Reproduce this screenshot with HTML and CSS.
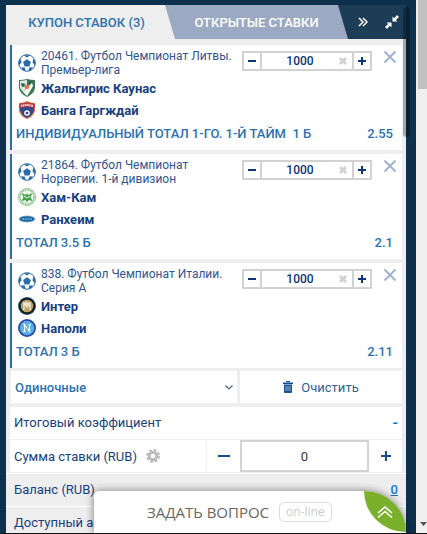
FILE: index.html
```html
<!DOCTYPE html>
<html lang="ru">
<head>
<meta charset="utf-8">
<title>Купон ставок</title>
<link rel="stylesheet" href="styles.css">
</head>
<body>

<svg class="sprite">
  <symbol id="ball" viewBox="0 0 18 18">
    <circle cx="9" cy="9" r="8.3" fill="#fff" stroke="#2b6ca8" stroke-width="1"/>
    <path fill="#2b6ca8" d="M9 5.2l3.900 2.800-1.500 4.500H6.600L5.100 8zM5.400 1.300h7.200L9 3.500zM.6 7.500L2.700 4.500l.8 4L.9 11.600zM17.400 7.500L15.300 4.500l-.8 4 2.600 3.100zM3.200 13.200l3.500.4 1 3.500-3-1.100zM14.800 13.200l-3.500.4-1 3.500 3-1.100z"/>
  </symbol>
  <symbol id="cross" viewBox="0 0 14 14">
    <path d="M1.500 1.500l11 11M12.500 1.500l-11 11" stroke="#a0b3d0" stroke-width="2" fill="none"/>
  </symbol>
  <symbol id="wipe" viewBox="0 0 10 10">
    <path d="M2 2l6 6M8 2L2 8" stroke="#d2d2d2" stroke-width="3" fill="none"/>
  </symbol>
</svg>

<div class="page">
  <div class="coupon">
    <div class="tabs">
      <button class="tab active">КУПОН СТАВОК (3)</button>
      <button class="tab open-bets">ОТКРЫТЫЕ СТАВКИ</button>
      <button class="tool" aria-label="Свернуть вправо">
        <svg width="10" height="10" viewBox="0 0 10 10"><path d="M1 1l4 4-4 4M5 1l4 4-4 4" fill="none" stroke="#fff" stroke-width="1.500"/></svg>
      </button>
      <button class="tool" aria-label="Уменьшить">
        <svg width="14" height="14" viewBox="0 0 14 14"><path fill="#fff" d="M7.500 1.500v5h5l-1.600-1.600L14 2 12 0 9.200 3.200zM6.500 12.500v-5h-5l1.600 1.600L0 12l2 2 2.800-3.200z"/></svg>
      </button>
    </div>

    <div class="bets">
      <div class="bet">
        <div class="bet-top">
          <svg class="logo"><use href="#ball"/></svg>
          <div class="event">20461. Футбол Чемпионат Литвы. Премьер-лига</div>
          <div class="stake">
            <button aria-label="Меньше"><svg width="8" height="8"><path d="M0 4h8" stroke="#0d3577" stroke-width="2"/></svg></button>
            <div class="amount">
              <input type="text" value="1000" aria-label="Ставка">
              <svg class="wipe"><use href="#wipe"/></svg>
            </div>
            <button aria-label="Больше"><svg width="8" height="8"><path d="M0 4h8M4 0v8" stroke="#0d3577" stroke-width="2"/></svg></button>
          </div>
          <button class="close" aria-label="Удалить"><svg><use href="#cross"/></svg></button>
        </div>
        <div class="team">
          <svg class="logo" viewBox="0 0 18 18"><path d="M1 1q4 0 8-1 4 1 8 1v8q-1 6-8 9-7-3-8-9z" fill="#3c7858"/><path d="M2 2l7-1v7l-4 5-3-4z" fill="#dfe8e0"/><path d="M9 9l5-5 1 3-4 7-2 3-4-4z" fill="#fff"/><path d="M3 4l5 1-2 1 2 1-4 1zM10 3l5-1-4 3z" fill="#275f3b"/><circle cx="9" cy="8" r="2.200" fill="#e27543"/></svg>
          <b>Жальгирис Каунас</b>
        </div>
        <div class="team">
          <svg class="logo" viewBox="0 0 18 18"><path d="M1 2q4 0 8-2 4 2 8 2v8q-1 5-8 8-7-3-8-8z" fill="#d87943"/><path d="M2 3q7-2 14 0v6q-1 5-7 8-6-3-7-8z" fill="#354889"/><path d="M1 3q8-3 16 0v4q-8-2-16 0z" fill="#b93d4e"/><path d="M3 5q6-2 12 0" fill="none" stroke="#f4d9ce" stroke-width="2" stroke-dasharray="1.500 .6"/><circle cx="9" cy="12" r="2.800" fill="#fff"/><path d="M9 10.500l1.500 1-.6 1.800H8.100l-.6-1.800z" fill="#354889"/></svg>
          <b>Банга Гаргждай</b>
        </div>
        <div class="outcome"><span>ИНДИВИДУАЛЬНЫЙ ТОТАЛ 1-ГО. 1-Й ТАЙМ&nbsp; 1 Б</span><span>2.55</span></div>
      </div>

      <div class="bet">
        <div class="bet-top">
          <svg class="logo"><use href="#ball"/></svg>
          <div class="event">21864. Футбол Чемпионат Норвегии. 1-й дивизион</div>
          <div class="stake">
            <button aria-label="Меньше"><svg width="8" height="8"><path d="M0 4h8" stroke="#0d3577" stroke-width="2"/></svg></button>
            <div class="amount">
              <input type="text" value="1000" aria-label="Ставка">
              <svg class="wipe"><use href="#wipe"/></svg>
            </div>
            <button aria-label="Больше"><svg width="8" height="8"><path d="M0 4h8M4 0v8" stroke="#0d3577" stroke-width="2"/></svg></button>
          </div>
          <button class="close" aria-label="Удалить"><svg><use href="#cross"/></svg></button>
        </div>
        <div class="team">
          <svg class="logo" viewBox="0 0 18 18"><circle cx="9" cy="9" r="8.500" fill="#f1f7f1" stroke="#8fc493"/><circle cx="9" cy="9" r="7" fill="none" stroke="#5cab61" stroke-width="1.200" stroke-dasharray="1 .7"/><path d="M3.500 5l4.500 2 1-2 1 2 4.500-2-2 4 2 4-4-1-1.500 2.500L7.500 12l-4 1 2-4z" fill="#43a047"/><path d="M6 8l3 2 3-2" stroke="#fff" fill="none"/></svg>
          <b>Хам-Кам</b>
        </div>
        <div class="team">
          <svg class="logo" viewBox="0 0 18 18"><ellipse cx="9" cy="9" rx="8.500" ry="3.500" fill="#a9bccb"/><ellipse cx="9" cy="9" rx="7.500" ry="2.800" fill="#1769aa"/><path d="M4 9h10" stroke="#79abd1" stroke-width="1.500" stroke-dasharray="2 .7"/></svg>
          <b>Ранхеим</b>
        </div>
        <div class="outcome"><span>ТОТАЛ 3.5 Б</span><span>2.1</span></div>
      </div>

      <div class="bet">
        <div class="bet-top">
          <svg class="logo"><use href="#ball"/></svg>
          <div class="event">838. Футбол Чемпионат Италии. Серия А</div>
          <div class="stake">
            <button aria-label="Меньше"><svg width="8" height="8"><path d="M0 4h8" stroke="#0d3577" stroke-width="2"/></svg></button>
            <div class="amount">
              <input type="text" value="1000" aria-label="Ставка">
              <svg class="wipe"><use href="#wipe"/></svg>
            </div>
            <button aria-label="Больше"><svg width="8" height="8"><path d="M0 4h8M4 0v8" stroke="#0d3577" stroke-width="2"/></svg></button>
          </div>
          <button class="close" aria-label="Удалить"><svg><use href="#cross"/></svg></button>
        </div>
        <div class="team">
          <svg class="logo" viewBox="0 0 18 18"><circle cx="9" cy="9" r="9" fill="#176184"/><circle cx="9" cy="9" r="8.200" fill="#171c1c"/><circle cx="9" cy="9" r="6.300" fill="#b9a471"/><path d="M6 13V6l3 4V6l3 4V5M5 6h7M12 10v3" fill="none" stroke="#f6f0dc" stroke-width="1.200"/></svg>
          <b>Интер</b>
        </div>
        <div class="team">
          <svg class="logo" viewBox="0 0 18 18"><circle cx="9" cy="9" r="9" fill="#244aa5"/><circle cx="9" cy="9" r="6.800" fill="#55aee5" stroke="#84c4ec" stroke-width=".6"/><path d="M6.500 12.500V5.500l5 7V5.500M5 5.500h2M10.500 5.500h2.500M5 12.500h3" fill="none" stroke="#fff" stroke-width="1.200"/></svg>
          <b>Наполи</b>
        </div>
        <div class="outcome"><span>ТОТАЛ 3 Б</span><span>2.11</span></div>
      </div>
    </div>

    <div class="actions">
      <div class="type">
        <select aria-label="Тип ставки">
          <option>Одиночные</option>
          <option>Экспресс</option>
        </select>
        <svg width="8" height="5" viewBox="0 0 8 5"><path d="M.5.5L4 4 7.500.5" fill="none" stroke="#4c6783" stroke-width="1.200"/></svg>
      </div>
      <button class="clear">
        <svg width="10" height="12" viewBox="0 0 10 12"><path d="M3.500 1.500V.5h3v1" fill="none" stroke="#164f91"/><path d="M0 1.500h10V3H0zM1 3.500h8V11q0 1-1 1H2q-1 0-1-1z" fill="#164f91"/><path d="M3 5v5M5 5v5M7 5v5" stroke="#b8cbe0" stroke-width=".8"/></svg>
        Очистить
      </button>
    </div>

    <div class="row total"><span>Итоговый коэффициент</span><span class="dash">-</span></div>
    <div class="row sum">
      <div class="sum-label">
        <label for="sum">Сумма ставки (RUB)</label>
        <svg width="14" height="14" viewBox="0 0 14 14"><circle cx="7" cy="7" r="6" fill="none" stroke="#bcbcbc" stroke-width="2" stroke-dasharray="2.700 2.010"/><circle cx="7" cy="7" r="3.800" fill="none" stroke="#bcbcbc" stroke-width="3"/></svg>
      </div>
      <button aria-label="Меньше"><svg width="12" height="12"><path d="M0 6h12" stroke="#164f91" stroke-width="2"/></svg></button>
      <input id="sum" type="text" value="0">
      <button aria-label="Больше"><svg width="12" height="12"><path d="M1 6h10M6 1v10" stroke="#164f91" stroke-width="2"/></svg></button>
    </div>
    <div class="row balance"><span>Баланс (RUB)</span><a href="#">0</a></div>
    <div class="row balance"><span>Доступный аванс</span></div>

    <div class="thumb"></div>
    <div class="chat">
      <span class="ask">ЗАДАТЬ ВОПРОС</span>
      <span class="online">on-line</span>
      <button class="leaf" aria-label="Открыть чат">
        <svg width="16" height="12" viewBox="0 0 16 12"><path d="M1 7l7-6 7 6M1 11.500l7-6 7 6" fill="none" stroke="#fff" stroke-width="1.600"/></svg>
      </button>
    </div>
  </div>
</div>

<div class="scrollbar">
  <div class="scrollbar-thumb"></div>
  <svg width="9" height="4" viewBox="0 0 9 4"><path d="M2 0h7L5.500 4z" fill="#505050"/></svg>
</div>

</body>
</html>
```
FILE: styles.css
```css
* {
  box-sizing: border-box;
}
body {
  margin: 0;
  height: 100vh;
  display: flex;
  overflow: hidden;
  background: #0d304d;
  border-bottom: 1px solid #111;
  font-family: Roboto, "Liberation Sans", sans-serif;
  font-size: 13px;
  color: #164080;
}
button, input, select {
  font: inherit;
  color: inherit;
  margin: 0;
  padding: 0;
  border: 0;
  border-radius: 0;
  background: none;
}
button {
  cursor: pointer;
}
svg {
  flex: none;
}
.sprite {
  position: absolute;
  width: 0;
  height: 0;
}
.page {
  flex: 1;
  min-width: 0;
  display: flex;
  padding: 5px 10px 0 6px;
}
.coupon {
  position: relative;
  flex: 1;
  min-width: 0;
  background: #eee;
}

/* tabs */
.tabs {
  display: grid;
  grid-template-columns: 169fr 173fr 29px 29px;
  height: 34px;
  background: #1c3d55;
}
.tab {
  font-size: 13px;
  font-weight: 500;
  white-space: nowrap;
}
.tab.active {
  padding-right: 8px;
  color: #2b72b0;
  background: #eee;
}
.tab.open-bets {
  margin-left: -10px;
  color: #fff;
  background: #9ba9c2;
  clip-path: polygon(0 0, calc(100% - 10px) 0, 100% 100%, 10px 100%);
}
.tool {
  display: flex;
  align-items: center;
  justify-content: center;
}

/* bets */
.bets {
  display: flex;
  flex-direction: column;
  gap: 4px;
  padding: 6px 4px 3px;
}
.bet {
  height: 105px;
  padding: 4px 5px 0 6px;
  background: #fff;
  border-left: 2px solid #2b6ca8;
}
.bet-top {
  display: flex;
  align-items: flex-start;
  height: 28px;
}
.logo {
  width: 18px;
  height: 18px;
}
.bet-top .logo {
  margin-top: 5px;
}
.event {
  flex: 1;
  padding-left: 5px;
  font-size: 12px;
  line-height: 14px;
  color: #2f5590;
}
.stake {
  display: flex;
  width: 130px;
  height: 20px;
  margin: 2px 11px 0 8px;
  border: 2px solid #d2d2d2;
  color: #0d3577;
}
.stake button {
  display: flex;
  align-items: center;
  justify-content: center;
  width: 16px;
}
.amount {
  flex: 1;
  display: flex;
  align-items: center;
  padding-right: 4px;
  border: solid #d2d2d2;
  border-width: 0 2px;
}
.amount input {
  flex: 1;
  width: 40px;
  text-align: center;
  font-size: 12px;
  font-weight: 500;
}
.wipe {
  width: 10px;
  height: 10px;
}
.close {
  display: flex;
  margin-top: 1px;
}
.close svg {
  width: 14px;
  height: 14px;
}
.team {
  display: flex;
  align-items: center;
  gap: 5px;
  height: 22px;
}
.team b {
  font-weight: 700;
}
.outcome {
  display: flex;
  justify-content: space-between;
  margin-left: -2px;
  padding: 5px 4px 0 0;
  line-height: 16px;
  font-weight: 500;
  color: #2b72b0;
  white-space: nowrap;
}

/* actions */
.actions {
  display: grid;
  grid-template-columns: 226fr 162fr;
  gap: 3px;
  height: 32px;
  margin: 0 4px 4px 5px;
}
.type {
  display: flex;
  align-items: center;
  padding: 0 4px;
  background: #fff;
}
.type select {
  flex: 1;
  min-width: 0;
  appearance: none;
  font-weight: 500;
  color: #2b72b0;
}
.clear {
  display: flex;
  align-items: center;
  justify-content: center;
  gap: 8px;
  color: #2f6199;
  background: #fff;
}

/* totals */
.row {
  display: flex;
  align-items: center;
  justify-content: space-between;
  height: 33px;
}
.total, .sum {
  margin: 0 4px;
  padding-left: 4px;
  background: #fff;
  border-bottom: 1px solid #eee;
}
.total {
  padding-bottom: 2px;
}
.dash {
  padding-right: 4px;
  font-size: 16px;
  font-weight: 500;
  color: #1976c8;
}
.sum-label {
  flex: 1;
  display: flex;
  align-items: center;
  gap: 9px;
  height: 32px;
  border-right: 1px solid #eee;
}
.sum button {
  width: 33px;
  display: flex;
  justify-content: center;
}
.sum input {
  width: 129px;
  height: 32px;
  border: 2px solid #d2d2d2;
  text-align: center;
  color: #333;
}
.balance {
  padding: 0 8px 2px;
  border-top: 1px solid #fff;
}
.balance a {
  font-weight: 500;
  color: #1976c8;
}

/* scroll and chat over the coupon */
.thumb {
  position: absolute;
  top: 2px;
  right: -4px;
  width: 7px;
  height: 130px;
  border-radius: 4px;
  background: rgba(0, 0, 0, .3);
}
.chat {
  position: absolute;
  right: 0;
  bottom: 0;
  display: flex;
  align-items: center;
  width: 78%;
  height: 42px;
  padding-left: 53px;
  gap: 10px;
  background: #fff;
  border-radius: 5px 42px 0 0;
  box-shadow: 0 0 8px rgba(0, 0, 0, .5);
}
.ask {
  font-family: "Open Sans", "Noto Sans", sans-serif;
  font-size: 15px;
  color: #666;
  white-space: nowrap;
}
.online {
  padding: 0 6px;
  border: 1px solid #ddd;
  border-radius: 5px;
  font-family: "Open Sans", "Noto Sans", sans-serif;
  font-size: 12px;
  line-height: 18px;
  color: #ccc;
}
.leaf {
  align-self: flex-start;
  display: flex;
  align-items: center;
  justify-content: center;
  width: 42px;
  height: 41px;
  margin-left: auto;
  background: #7bb02c;
  border-radius: 0 100% 0 100%;
}

/* page scrollbar */
.scrollbar {
  display: flex;
  flex-direction: column;
  justify-content: space-between;
  align-items: flex-end;
  width: 11px;
  padding-bottom: 7px;
  background: #f0f0f0;
}
.scrollbar-thumb {
  width: 9px;
  height: 89px;
  background: #c1c1c1;
}
```
